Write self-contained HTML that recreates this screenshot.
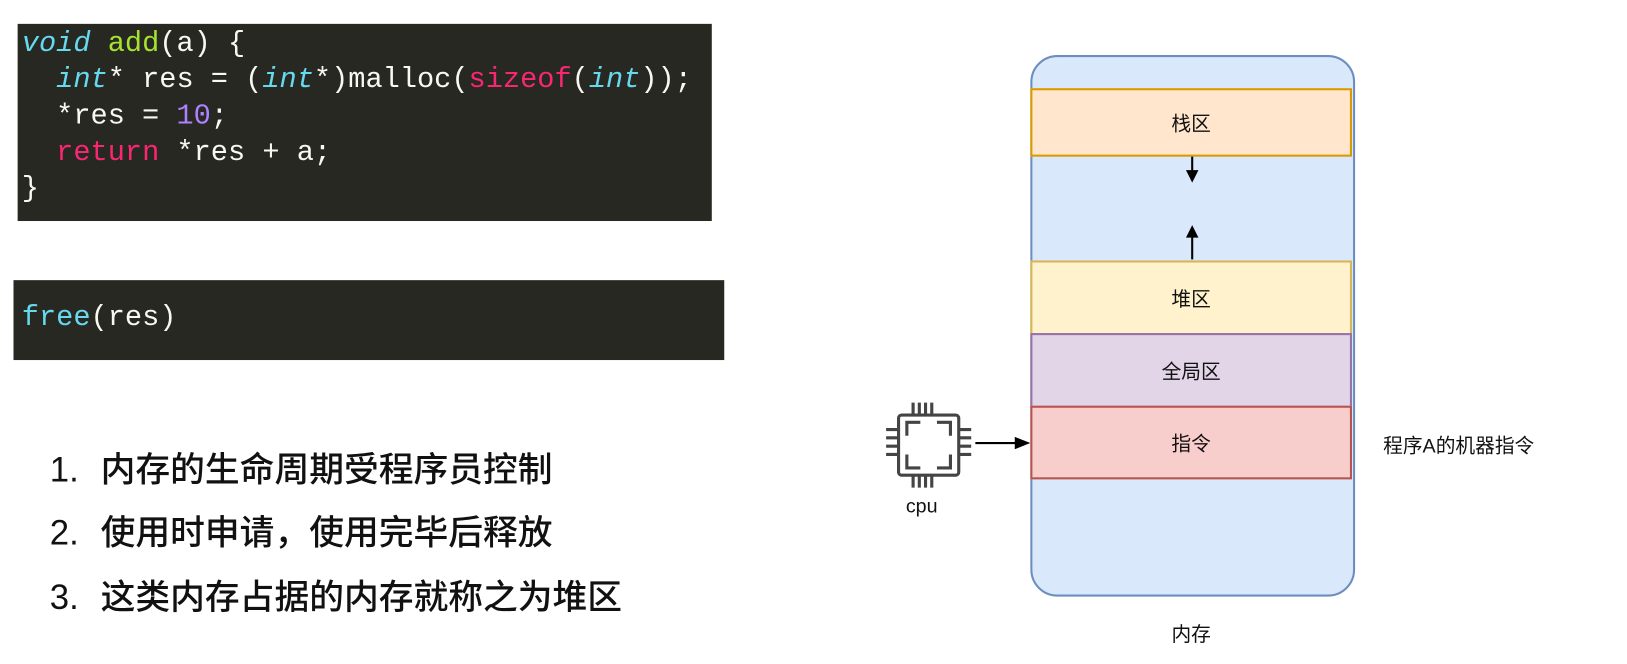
<!DOCTYPE html>
<html><head><meta charset="utf-8"><style>
body{margin:0;width:1627px;height:662px;background:#fff;position:relative;overflow:hidden;font-family:"Liberation Sans","Noto Sans CJK SC",sans-serif}
#w{position:absolute;left:0;top:0;width:1568px;height:640px;transform:scale(1.0376);transform-origin:0 0}
.code{position:absolute;background:#272822;font-family:"Liberation Mono",monospace;font-size:27.6px;color:#f8f8f2;white-space:pre;}
.l{position:absolute;left:4px;height:35px;line-height:35px}
.b{color:#66d9ef}.g{color:#a6e22e}.r{color:#f92672}.p{color:#ae81ff}
.li{position:absolute;left:48px;font-size:33.5px;font-weight:500;color:#111;width:700px;height:48px}
.li b,.li span{position:absolute;top:0;line-height:48px;height:48px;font-weight:500}
.li b{left:0}
.li span{left:49px}
.box{position:absolute;left:993px;width:310px;border:2px solid;box-sizing:border-box;text-align:center;font-size:19px;color:#111;display:flex;align-items:center;justify-content:center}
.t{position:absolute;font-size:19px;color:#111}
</style></head><body><div id="w">
<div class="code" style="left:17px;top:23px;width:669px;height:190px">
<div class="l" style="top:2px"><i class="b">void</i> <span class="g">add</span>(a) {</div>
<div class="l" style="top:37px">  <i class="b">int</i>* res = (<i class="b">int</i>*)malloc(<span class="r">sizeof</span>(<i class="b">int</i>));</div>
<div class="l" style="top:72px">  *res = <span class="p">10</span>;</div>
<div class="l" style="top:107px">  <span class="r">return</span> *res + a;</div>
<div class="l" style="top:142px">}</div>
</div>
<div class="code" style="left:13px;top:270px;width:685px;height:77px">
<div class="l" style="top:19px;left:8px"><span class="b">free</span>(res)</div>
</div>
<div class="li" style="top:430px"><b>1.</b><span>内存的生命周期受程序员控制</span></div>
<div class="li" style="top:491px"><b>2.</b><span>使用时申请，使用完毕后释放</span></div>
<div class="li" style="top:553px"><b>3.</b><span>这类内存占据的内存就称之为堆区</span></div>

<div style="position:absolute;left:993px;top:53px;width:313px;height:522px;background:#dae8fc;border:2px solid #6c8ebf;border-radius:26px;box-sizing:border-box"></div>
<div class="box" style="top:85px;height:66px;background:#ffe6cc;border-color:#d79b00">栈区</div>
<div class="box" style="top:251px;height:72px;background:#fff2cc;border-color:#d6b656">堆区</div>
<div class="box" style="top:321px;height:72px;background:#e1d5e7;border-color:#9673a6">全局区</div>
<div class="box" style="top:391px;height:71px;background:#f8cecc;border-color:#b85450">指令</div>
<svg style="position:absolute;left:0;top:0" width="1568" height="640">
<line x1="1149" y1="151" x2="1149" y2="168" stroke="#000" stroke-width="2"/>
<polygon points="1143,164 1155,164 1149,176" fill="#000"/>
<line x1="1149" y1="250" x2="1149" y2="225" stroke="#000" stroke-width="2"/>
<polygon points="1143,229 1155,229 1149,217" fill="#000"/>
<line x1="940" y1="427" x2="982" y2="427" stroke="#000" stroke-width="2"/>
<polygon points="978,421 993,427 978,433" fill="#000"/>
<g stroke="#444" stroke-width="3" fill="none">
<rect x="866" y="400" width="58" height="58" rx="3"/>
<path d="M887 407h-13v13 M903 407h13v13 M874 438v13h13 M916 438v13h-13"/>
<path d="M880 388v12 M886 388v12 M892 388v12 M898 388v12 M880 458v12 M886 458v12 M892 458v12 M898 458v12"/>
<path d="M854 414h12 M854 422h12 M854 430h12 M854 438h12 M924 414h12 M924 422h12 M924 430h12 M924 438h12"/>
</g>
</svg>
<div class="t" style="left:873px;top:478px">cpu</div>
<div class="t" style="left:1333px;top:415px">程序A的机器指令</div>
<div class="t" style="left:1129px;top:597px">内存</div>
</div></body></html>
